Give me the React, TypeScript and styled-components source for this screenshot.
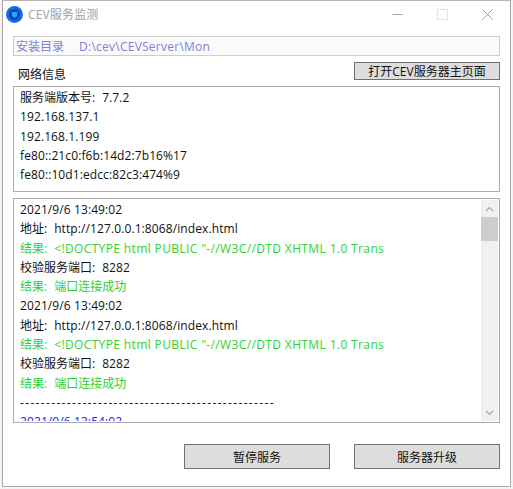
import React from 'react'
import styled, { createGlobalStyle } from 'styled-components'

const GlobalStyle = createGlobalStyle`
  html, body {
    margin: 0;
    padding: 0;
    background: #ffffff;
  }
  body {
    font-family: "Open Sans", "Noto Sans CJK SC", sans-serif;
    font-size: 12px;
    color: #111;
  }
`

const Desktop = styled.div`
  width: 513px;
  height: 489px;
  padding: 0 2px 2px 2px;
  box-sizing: border-box;
  background: #f4f4f4;
`

const Window = styled.div`
  height: 487px;
  box-sizing: border-box;
  background: #ffffff;
  border: 1px solid #a8a8a8;
  border-top-color: #b4b4b4;
  padding: 0 10px 0 10px;
  display: flex;
  flex-direction: column;
`

const TitleBar = styled.div`
  height: 26px;
  margin: 0 -10px 9px -10px;
  padding: 0 0 0 3px;
  display: flex;
  align-items: center;
`

const AppTitle = styled.div`
  margin-left: 5px;
  font-size: 12px;
  letter-spacing: 0.15px;
  color: #a0a0a0;
  flex: 1;
`

const WinButton = styled.div`
  width: 45px;
  height: 26px;
  display: flex;
  align-items: center;
  justify-content: center;
`

const PathField = styled.div`
  height: 20px;
  box-sizing: border-box;
  background: #fafafa;
  border: 1px solid #cccccc;
  padding-left: 2px;
  display: flex;
  align-items: center;
  color: #8080d8;
  white-space: nowrap;
`

const PathValue = styled.span`
  margin-left: 15px;
  letter-spacing: 0.25px;
`

const InfoHeader = styled.div`
  height: 18px;
  margin-top: 6px;
  display: flex;
  align-items: center;
  justify-content: space-between;
`

const InfoLabel = styled.div`
  margin-left: 5px;
  padding-top: 6px;
  color: #111;
`

const Btn = styled.button<{ $h?: number }>`
  width: 146px;
  height: ${p => p.$h ?? 18}px;
  box-sizing: border-box;
  padding: 0;
  margin: 0;
  background: #dddddd;
  border: 1px solid #707070;
  border-radius: 0;
  font: inherit;
  color: #111;
  display: flex;
  align-items: center;
  justify-content: center;
`

const InfoBox = styled.div`
  height: 106px;
  margin-top: 6px;
  box-sizing: border-box;
  border: 1px solid #acacb0;
  padding: 1px 0 0 6px;
`

const Line = styled.div<{ $color?: string }>`
  height: 19.3px;
  line-height: 19.3px;
  white-space: nowrap;
  color: ${p => p.$color ?? '#111'};
`

const Label = styled.span`
  margin-right: 7px;
`

const Value = styled.span<{ $spacing?: number }>`
  letter-spacing: ${p => p.$spacing ?? 0.1}px;
`

const LogBox = styled.div`
  height: 225px;
  margin-top: 6px;
  box-sizing: border-box;
  border: 1px solid #acacb0;
  display: flex;
  padding: 1px;
  overflow: hidden;
`

const LogText = styled.div`
  flex: 1;
  min-width: 0;
  overflow: hidden;
  padding: 0 0 0 5px;
`

const ScrollBar = styled.div`
  width: 17px;
  background: #f0f0f0;
  display: flex;
  flex-direction: column;
  align-items: center;
`

const ScrollArrow = styled.div`
  height: 17px;
  width: 100%;
  display: flex;
  align-items: center;
  justify-content: center;
`

const ScrollThumb = styled.div`
  width: 100%;
  height: 24px;
  background: #cdcdcd;
`

const ScrollTrack = styled.div`
  flex: 1;
`

const Footer = styled.div`
  margin-top: 21px;
  display: flex;
  justify-content: flex-end;
  gap: 24px;
`

const green = '#2fd12f'
const blue = '#2222ee'

type Row = { label?: string; text: string; color?: string; spacing?: number }

const logLines: Row[] = [
  { text: '2021/9/6 13:49:02' },
  { label: '地址:', text: 'http://127.0.0.1:8068/index.html' },
  { label: '结果:', text: '<!DOCTYPE html PUBLIC "-//W3C//DTD XHTML 1.0 Trans', color: green, spacing: 0.37 },
  { label: '校验服务端口:', text: '8282' },
  { label: '结果:', text: '端口连接成功', color: green, spacing: 0 },
  { text: '2021/9/6 13:49:02' },
  { label: '地址:', text: 'http://127.0.0.1:8068/index.html' },
  { label: '结果:', text: '<!DOCTYPE html PUBLIC "-//W3C//DTD XHTML 1.0 Trans', color: green, spacing: 0.37 },
  { label: '校验服务端口:', text: '8282' },
  { label: '结果:', text: '端口连接成功', color: green, spacing: 0 },
  { text: '-------------------------------------------------', spacing: 1.34 },
  { text: '2021/9/6 13:54:02', color: blue },
]

const infoLines: Row[] = [
  { label: '服务端版本号:', text: '7.7.2' },
  { text: '192.168.137.1' },
  { text: '192.168.1.199' },
  { text: 'fe80::21c0:f6b:14d2:7b16%17' },
  { text: 'fe80::10d1:edcc:82c3:474%9' },
]

function AppIcon() {
  return (
    <svg width="17" height="17" viewBox="0 0 17 17">
      <circle cx="8.5" cy="8.5" r="8.5" fill="#0f6ff2" />
      <circle cx="8.5" cy="8.5" r="5.5" fill="#0a43ad" />
      <path d="M5.5 6.2 L11.5 5.8 L11 10 L8.5 12 L6 10 Z" fill="#2aa6f2" />
    </svg>
  )
}

function renderRow(row: Row, key: number) {
  return (
    <Line key={key} $color={row.color}>
      {row.label && <Label>{row.label}</Label>}
      <Value $spacing={row.spacing}>{row.text}</Value>
    </Line>
  )
}

export default function App() {
  return (
    <>
      <GlobalStyle />
      <Desktop>
        <Window>
          <TitleBar>
            <AppIcon />
            <AppTitle>CEV服务监测</AppTitle>
            <WinButton>
              <svg width="11" height="11" viewBox="0 0 11 11">
                <path d="M0.5 5.5 H10.5" stroke="#a8a8a8" strokeWidth="1" />
              </svg>
            </WinButton>
            <WinButton>
              <svg width="11" height="11" viewBox="0 0 11 11">
                <rect x="0.5" y="0.5" width="10" height="10" fill="none" stroke="#e2e2e2" strokeWidth="1" />
              </svg>
            </WinButton>
            <WinButton>
              <svg width="11" height="11" viewBox="0 0 11 11">
                <path d="M0.5 0.5 L10.5 10.5 M10.5 0.5 L0.5 10.5" stroke="#9a9a9a" strokeWidth="1" />
              </svg>
            </WinButton>
          </TitleBar>

          <PathField>
            安装目录<PathValue>D:\cev\CEVServer\Mon</PathValue>
          </PathField>

          <InfoHeader>
            <InfoLabel>网络信息</InfoLabel>
            <Btn>打开CEV服务器主页面</Btn>
          </InfoHeader>

          <InfoBox>{infoLines.map(renderRow)}</InfoBox>

          <LogBox>
            <LogText>{logLines.map(renderRow)}</LogText>
            <ScrollBar>
              <ScrollArrow>
                <svg width="9" height="6" viewBox="0 0 9 6">
                  <path d="M1 5 L4.5 1.5 L8 5" fill="none" stroke="#a6a6a6" strokeWidth="1.2" />
                </svg>
              </ScrollArrow>
              <ScrollThumb />
              <ScrollTrack />
              <ScrollArrow>
                <svg width="9" height="6" viewBox="0 0 9 6">
                  <path d="M1 1 L4.5 4.5 L8 1" fill="none" stroke="#a6a6a6" strokeWidth="1.2" />
                </svg>
              </ScrollArrow>
            </ScrollBar>
          </LogBox>

          <Footer>
            <Btn $h={25}>暂停服务</Btn>
            <Btn $h={25}>服务器升级</Btn>
          </Footer>
        </Window>
      </Desktop>
    </>
  )
}
